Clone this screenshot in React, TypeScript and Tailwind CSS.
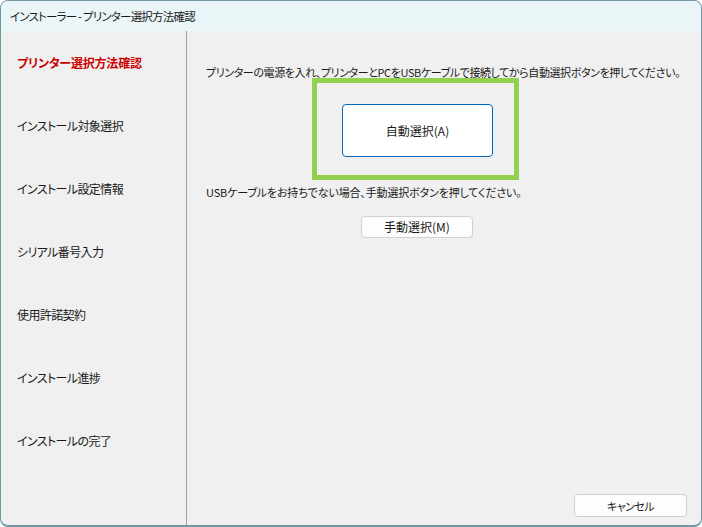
import React from "react";

const items = [
  "プリンター選択方法確認",
  "インストール対象選択",
  "インストール設定情報",
  "シリアル番号入力",
  "使用許諾契約",
  "インストール進捗",
  "インストールの完了",
];

export default function App() {
  return (
    <div
      className="w-[702px] h-[527px] bg-white text-[12px] text-[#1a1a1a] [font-feature-settings:'palt']"
      style={{ fontFamily: '"Noto Sans CJK JP", "Noto Sans", sans-serif' }}
    >
      <div className="w-full h-full flex flex-col border border-b-2 border-[#6f98a1] rounded-lg overflow-hidden bg-[#f0f0f0]">
        <div className="h-[30px] shrink-0 bg-[#eaf5f8] flex items-center pl-[9px] leading-[16px] text-[11.5px] tracking-[-0.8px] whitespace-nowrap">
          インストーラー - プリンター選択方法確認
        </div>
        <div className="flex flex-1 min-h-0">
          <div className="w-[186px] shrink-0 border-r border-[#a0a0a0] flex flex-col">
            {items.map((t, i) => (
              <div
                key={t}
                className={
                  i === 0
                    ? "h-[63px] flex items-center pl-[16px] text-[#cc0000] font-bold tracking-[-0.2px] whitespace-nowrap"
                    : "h-[63px] flex items-center pl-[16px] tracking-[-0.6px] whitespace-nowrap"
                }
              >
                {t}
              </div>
            ))}
          </div>
          <div className="flex-1 flex flex-col pl-[19px] pt-[33px]">
            <div className="leading-[16px] text-[11px] tracking-[-0.4px] whitespace-nowrap">
              プリンターの電源を入れ、プリンターとPCをUSBケーブルで接続してから自動選択ボタンを押してください。
            </div>
            <div className="mt-[-2px] ml-[106px] w-[207px] h-[102px] border-[5px] border-[#92d050] pl-[25px] pt-[21px]">
              <button className="w-[151px] h-[53px] bg-white border border-[#0067c0] rounded-[4px] flex items-center justify-center leading-[16px]">
                自動選択(A)
              </button>
            </div>
            <div className="mt-[4px] leading-[16px] text-[11px] tracking-[-0.15px] whitespace-nowrap">
              USBケーブルをお持ちでない場合、手動選択ボタンを押してください。
            </div>
            <button className="mt-[16px] ml-[155px] w-[112px] h-[22px] bg-[#fdfdfd] border border-[#d0d0d0] rounded-[4px] flex items-center justify-center leading-[16px]">
              手動選択(M)
            </button>
            <button className="mt-auto mb-[8px] self-end mr-[14px] w-[113px] h-[23px] bg-[#fdfdfd] border border-[#d0d0d0] rounded-[4px] flex items-center justify-center leading-[16px] text-[11px] tracking-[-0.5px]">
              キャンセル
            </button>
          </div>
        </div>
      </div>
    </div>
  );
}
